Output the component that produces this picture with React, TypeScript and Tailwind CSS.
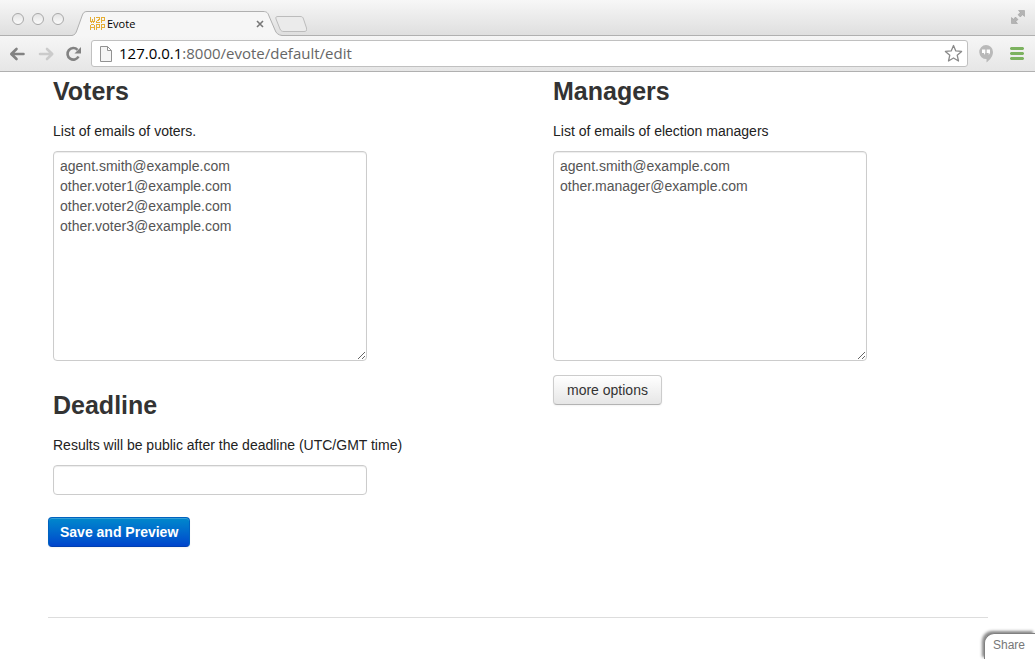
import React from "react";

const glyphs = [
  { x: 0, y: 1, rows: ["1...1", "1...1", "1.1.1", "1.1.1", "11111", ".1.1."] },
  { x: 6, y: 1, rows: ["1111", "...1", "..11", ".11.", "1...", "1111"] },
  { x: 11, y: 1, rows: ["1111", "1..1", "1..1", "1111", "1...", "1..."] },
  { x: 0, y: 8, rows: [".111.", "1...1", "1...1", "11111", "1...1", "1...1"] },
  { x: 6, y: 8, rows: ["1111", "1..1", "1..1", "1111", "1...", "1..."] },
  { x: 11, y: 8, rows: ["1111", "1..1", "1..1", "1111", "1...", "1..."] },
];

function Favicon() {
  return (
    <svg className="h-[15px] w-[16px] shrink-0" viewBox="0 0 16 15" shapeRendering="crispEdges" aria-hidden="true">
      {glyphs.map((g) =>
        g.rows.map((row, r) =>
          row.split("").map((c, i) =>
            c === "1" ? <rect key={`${g.x}-${g.y}-${r}-${i}`} x={g.x + i} y={g.y + r} width="1" height="1" fill="#e5ae36" /> : null
          )
        )
      )}
    </svg>
  );
}

function TabStrip() {
  return (
    <header className="flex h-9 items-end border-b border-[#b0b0b0] bg-linear-to-b from-[#f7f7f7] to-[#dfdfdf]">
      <div className="flex gap-2 self-start pt-[13px] pl-3">
        {["Close window", "Minimize window", "Zoom window"].map((label) => (
          <button
            key={label}
            type="button"
            aria-label={label}
            className="size-3 rounded-full border border-[#a8a8a8] bg-linear-to-b from-[#e4e4e4] to-[#fbfbfb]"
          />
        ))}
      </div>
      <div className="relative -mb-px ml-2 flex h-[25px] w-[210px] items-center pr-[14px] pl-[18px]">
        <svg className="absolute inset-0 h-full w-full" viewBox="0 0 210 25" aria-hidden="true">
          <path d="M0 24.5C3 24 4 22 5 19L10 5C11 2 12 .5 15 .5H191C195 .5 196 2 197 5L203 19C204 22 206 24 210 24.5V25H0Z" fill="#f6f6f6" />
          <path d="M0 24.5C3 24 4 22 5 19L10 5C11 2 12 .5 15 .5H191C195 .5 196 2 197 5L203 19C204 22 206 24 210 24.5" fill="none" stroke="#b0b0b0" />
        </svg>
        <div className="relative flex w-full items-center">
          <Favicon />
          <span className="ml-px flex-1 text-[11px] leading-4 text-black">Evote</span>
          <button type="button" aria-label="Close tab" className="flex size-4 items-center justify-center">
            <svg className="size-2" viewBox="0 0 8 8" aria-hidden="true">
              <path d="M1 1L7 7M7 1L1 7" stroke="#777" strokeWidth="1.6" />
            </svg>
          </button>
        </div>
      </div>
      <button type="button" aria-label="New tab" className="mb-[3px] -ml-[7px]">
        <svg className="h-4 w-8" viewBox="0 0 32 16" aria-hidden="true">
          <path d="M3 .5H25C27 .5 28 1 28.5 3L31.5 12C32 15 31 15.5 29 15.5H9C7 15.5 6 15 5 13L1 3C.5 1 1 .5 3 .5Z" fill="#ebebeb" stroke="#bcbcbc" />
        </svg>
      </button>
      <button type="button" aria-label="Full screen" className="mr-[10px] mb-[11px] ml-auto">
        <svg className="size-[14px]" viewBox="0 0 14 14" fill="#b4b4b4" stroke="#999" strokeWidth=".5" aria-hidden="true">
          <path d="M7.500 .5H13.500V6.500L11.500 4.700L9.300 7L7 4.700L9.300 2.500ZM.5 7.500L2.500 9.300L4.500 7L7 9.500L4.700 11.500L6.500 13.500H.5Z" />
        </svg>
      </button>
    </header>
  );
}

function Toolbar() {
  return (
    <nav aria-label="Browser" className="flex h-9 items-center border-b border-[#b0b0b0] bg-linear-to-b from-[#f6f6f6] to-[#e6e6e6] pr-[11px] pl-[9px]">
      <button type="button" aria-label="Back">
        <svg className="h-4 w-[17px]" viewBox="0 0 17 16" fill="none" stroke="#828282" strokeWidth="2.6" strokeLinecap="round" strokeLinejoin="round" aria-hidden="true">
          <path d="M7.500 3L2.300 8L7.500 13M2.500 8H14.500" />
        </svg>
      </button>
      <button type="button" aria-label="Forward" className="ml-3">
        <svg className="h-4 w-[17px]" viewBox="0 0 17 16" fill="none" stroke="#cbcbcb" strokeWidth="2.6" strokeLinecap="round" strokeLinejoin="round" aria-hidden="true">
          <path d="M9 3L14.200 8L9 13M14 8H2" />
        </svg>
      </button>
      <button type="button" aria-label="Reload" className="ml-[10px]">
        <svg className="h-4 w-[17px]" viewBox="0 0 17 16" aria-hidden="true">
          <path d="M13.500 10.500A5.800 5.800 0 1 1 12.500 3.800" fill="none" stroke="#828282" strokeWidth="2.6" />
          <path d="M16 1V7.500H9.500Z" fill="#828282" />
        </svg>
      </button>
      <div className="ml-[9px] flex h-[27px] flex-1 items-center rounded-[3px] border border-[#c0c0c0] bg-white pr-1 pl-2">
        <svg className="h-4 w-3" viewBox="0 0 12 16" fill="#f5f5f5" stroke="#929292" aria-hidden="true">
          <path d="M.5 .5H7.500L11.500 4.500V15.500H.5ZM7.500 .5V4.500H11.500" />
        </svg>
        <a href="#address" className="ml-[7px] flex-1 pb-[2px] text-[15px] leading-5 text-[#666]">
          <span className="text-black">127.0.0.1</span>:8000/evote/default/edit
        </a>
        <button type="button" aria-label="Bookmark this page">
          <svg className="size-[19px]" viewBox="0 0 19 19" fill="#fff" stroke="#8a8a8a" strokeWidth="1.3" strokeLinejoin="round" aria-hidden="true">
            <path d="M9.500 1.500L11.800 6.900L17.600 7.400L13.200 11.200L14.500 17L9.500 14L4.500 17L5.800 11.200L1.400 7.400L7.200 6.900Z" />
          </svg>
        </button>
      </div>
      <button type="button" aria-label="Hangouts" className="ml-[11px]">
        <svg className="h-[18px] w-[14px]" viewBox="0 0 14 18" aria-hidden="true">
          <path d="M7 0A7 7 0 0 1 14 7C14 11 11 15 7.500 17.500V14A7 7 0 0 1 7 0Z" fill="#b9b9b9" />
          <path d="M3 4.500H6.300V8L5 10V8H3ZM7.700 4.500H11V8L9.700 10V8H7.700Z" fill="#fff" />
        </svg>
      </button>
      <button type="button" aria-label="Menu" className="ml-[17px]">
        <svg className="h-[13px] w-[14px]" viewBox="0 0 14 13" fill="#7cb25f" aria-hidden="true">
          <path d="M1 0H13L14 1V2L13 3H1L0 2V1ZM1 5H13L14 6V7L13 8H1L0 7V6ZM1 10H13L14 11V12L13 13H1L0 12V11Z" />
        </svg>
      </button>
    </nav>
  );
}

const box =
  "block w-full max-w-[314px] rounded-[4px] border border-[#ccc] bg-white px-[6px] py-1 text-[14px] leading-5 text-[#555] shadow-[inset_0_1px_1px_rgba(0,0,0,0.075)]";

type FieldProps = { id: string; title: string; hint: string; children: React.ReactNode };

function Field({ id, title, hint, children }: FieldProps) {
  return (
    <section>
      <h3 className="text-[25px] leading-10 font-bold text-[#333]">{title}</h3>
      <label htmlFor={id} className="mt-[10px] mb-[10px] block">
        {hint}
      </label>
      {children}
    </section>
  );
}

export default function App() {
  return (
    <div className="relative flex min-h-screen flex-col overflow-hidden bg-white">
      <div className="font-['Open_Sans','Noto_Sans',sans-serif]">
        <TabStrip />
        <Toolbar />
      </div>
      <main className="-mt-px mr-[47px] ml-12 font-['Liberation_Sans',Arial,sans-serif] text-[14px] leading-5 text-[#222]">
        <form onSubmit={(e) => e.preventDefault()}>
          <div className="grid grid-cols-[50fr_43fr] px-[5px]">
            <div className="flex flex-col gap-6">
              <Field id="voters" title="Voters" hint="List of emails of voters.">
                <textarea
                  id="voters"
                  className={`${box} h-[210px] resize`}
                  defaultValue={"agent.smith@example.com\nother.voter1@example.com\nother.voter2@example.com\nother.voter3@example.com"}
                />
              </Field>
              <Field id="deadline" title="Deadline" hint="Results will be public after the deadline (UTC/GMT time)">
                <input id="deadline" type="text" className={`${box} h-[30px]`} />
              </Field>
            </div>
            <div>
              <Field id="managers" title="Managers" hint="List of emails of election managers">
                <textarea
                  id="managers"
                  className={`${box} h-[210px] resize`}
                  defaultValue={"agent.smith@example.com\nother.manager@example.com"}
                />
              </Field>
              <button
                type="button"
                className="mt-[14px] rounded-[4px] border border-[#ccc] border-b-[#b3b3b3] bg-linear-to-b from-white to-[#e6e6e6] px-[13px] py-1 text-[#333] shadow-[0_1px_2px_rgba(0,0,0,0.05)]"
              >
                more options
              </button>
            </div>
          </div>
          <button
            type="submit"
            className="mt-[22px] rounded-[4px] border border-[#0062bf] border-b-[#003fb0] bg-linear-to-b from-[#0088cc] to-[#0044cc] px-[11px] py-1 font-bold text-white shadow-[inset_0_1px_0_rgba(255,255,255,0.2),0_1px_2px_rgba(0,0,0,0.05)]"
          >
            Save and Preview
          </button>
        </form>
        <hr className="mt-[70px] border-[#ddd]" />
      </main>
      <a
        href="#share"
        className="absolute right-0 bottom-0 rounded-tl-[10px] border-t border-l border-[#808080] bg-white pt-[1px] pr-[10px] pb-1 pl-2 font-['Liberation_Sans',Arial,sans-serif] text-[12px] leading-5 text-[#777] shadow-[-2px_-2px_3px_#888]"
      >
        Share
      </a>
    </div>
  );
}
